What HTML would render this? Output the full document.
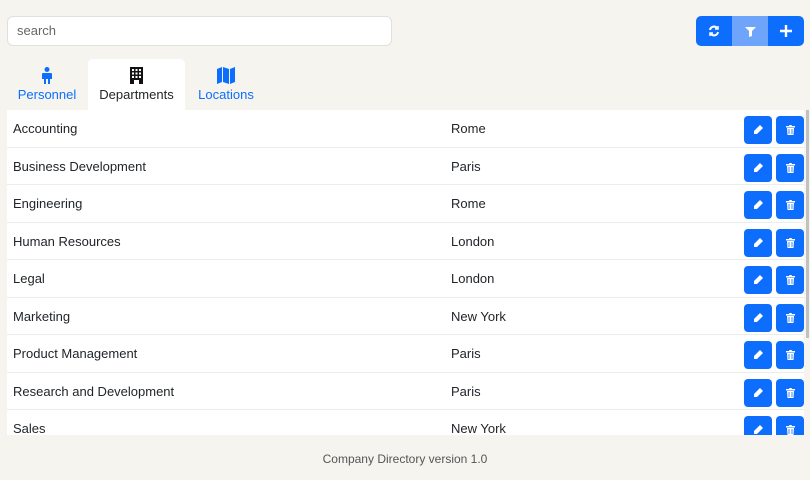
<!DOCTYPE html><html><head><style>
body{margin:0;width:810px;height:480px;background:#f6f4ef;font-family:"Liberation Sans",sans-serif;position:relative;overflow:hidden;color:#212529}
.search{position:absolute;left:7px;top:16px;width:383px;height:28px;background:#fff;border:1px solid #e2e0da;border-radius:6px;font-size:13px;color:#666;line-height:28px;padding-left:9px;box-sizing:border-box;width:385px;height:30px}
.tb{position:absolute;top:16px;left:696px;width:108px;height:30px;border-radius:5px;overflow:hidden;display:flex}
.tb div{width:36px;height:30px;background:#0d6efd;display:flex;align-items:center;justify-content:center}
.tb div.f{background:#6ea5fb}
.tab{position:absolute;top:59px;height:51px;text-align:center;font-size:13px;color:#0d6efd}
.tab.a{background:#fff;color:#212529;border-radius:5px 5px 0 0}
.tab svg{display:block;margin:8px auto 3px}
.tbl{position:absolute;left:7px;top:110px;width:797px;height:325px;background:#fff;overflow:hidden}
.row{height:37.5px;border-bottom:1px solid #ececec;box-sizing:border-box;position:relative;font-size:13px;line-height:37px}
.row .n{position:absolute;left:6px}.row .l{position:absolute;left:444px}
.b{position:absolute;top:6px;width:28px;height:28px;background:#0d6efd;border-radius:4px;display:flex;align-items:center;justify-content:center}
.sb{position:absolute;left:806px;top:110px;width:3px;height:228px;background:#c1c1c1}
.foot{position:absolute;top:452px;width:100%;text-align:center;font-size:12px;color:#555}
</style></head><body>
<div class="search">search</div>
<div class="tb">
<div><svg width="12" height="12" viewBox="0 0 12 12" fill="none" stroke="#fff" stroke-width="2"><path d="M2 5a4 4 0 0 1 7-2"/><path d="M10 7a4 4 0 0 1-7 2"/><path d="M10 1v3H7M2 11V8h3" stroke-width="1.5"/></svg></div>
<div class="f"><svg width="11" height="11" viewBox="0 0 11 11"><path d="M0 1h11L7 5v5L4 11V5z" fill="#fff"/></svg></div>
<div><svg width="12" height="12" viewBox="0 0 12 12" stroke="#fff" stroke-width="2.4"><path d="M6 0v12M0 6h12"/></svg></div>
</div>
<div class="tab" style="left:7px;width:80px"><svg width="10" height="17" viewBox="0 0 10 17" fill="#0d6efd"><circle cx="5" cy="2.5" r="2.5"/><path d="M1 6h8a1 1 0 0 1 1 1v5H8v5H6v-5H4v5H2v-5H0V7a1 1 0 0 1 1-1z"/></svg>Personnel</div>
<div class="tab a" style="left:88px;width:97px"><svg width="13" height="17" viewBox="0 0 13 17"><rect width="13" height="17" fill="#111"/><g fill="#fff"><rect x="2" y="2" width="2" height="2"/><rect x="5.5" y="2" width="2" height="2"/><rect x="9" y="2" width="2" height="2"/><rect x="2" y="5.5" width="2" height="2"/><rect x="5.5" y="5.5" width="2" height="2"/><rect x="9" y="5.5" width="2" height="2"/><rect x="2" y="9" width="2" height="2"/><rect x="5.5" y="9" width="2" height="2"/><rect x="9" y="9" width="2" height="2"/><rect x="4" y="13" width="5" height="4"/></g></svg>Departments</div>
<div class="tab" style="left:188px;width:76px"><svg width="18" height="17" viewBox="0 0 18 17" fill="#0d6efd"><path d="M0 2l5-2v15l-5 2zM6 0l6 2v15l-6-2zM13 2l5-2v15l-5 2z"/></svg>Locations</div>
<div class="tbl">
<div class="row"><span class="n">Accounting</span><span class="l">Rome</span></div>
<div class="row"><span class="n">Business Development</span><span class="l">Paris</span></div>
<div class="row"><span class="n">Engineering</span><span class="l">Rome</span></div>
<div class="row"><span class="n">Human Resources</span><span class="l">London</span></div>
<div class="row"><span class="n">Legal</span><span class="l">London</span></div>
<div class="row"><span class="n">Marketing</span><span class="l">New York</span></div>
<div class="row"><span class="n">Product Management</span><span class="l">Paris</span></div>
<div class="row"><span class="n">Research and Development</span><span class="l">Paris</span></div>
<div class="row"><span class="n">Sales</span><span class="l">New York</span></div>
</div>
<div class="sb"></div>
<div class="foot">Company Directory version 1.0</div>
<script>
document.querySelectorAll('.row').forEach(r=>{r.insertAdjacentHTML('beforeend','<div class="b" style="left:737px"><svg width="10" height="10" viewBox="0 0 10 10"><path d="M7 0l3 3-6 6H1V6z" fill="#fff"/></svg></div><div class="b" style="left:769px"><svg width="9" height="10" viewBox="0 0 9 10"><path d="M0 1h3l.5-1h2L6 1h3v1.5H0zM1 3h7l-.5 7h-6z" fill="#fff"/><path d="M3 4v5M6 4v5" stroke="#0d6efd" stroke-width=".8"/></svg></div>')});
</script>
</body></html>
